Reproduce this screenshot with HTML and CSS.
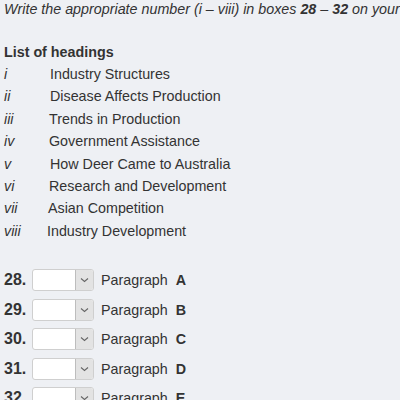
FILE: index.html
```html
<!DOCTYPE html>
<html>
<head>
<meta charset="utf-8">
<link rel="stylesheet" href="styles.css">
</head>
<body>
<div class="page">
  <p class="instr">Write the appropriate number (i – viii) in boxes <b>28</b> – <b>32</b> on your</p>
  <div class="list">
    <div class="title">List of headings</div>
    <div class="item"><span class="num">i</span><span class="h h1">Industry Structures</span></div>
    <div class="item"><span class="num">ii</span><span class="h h2">Disease Affects Production</span></div>
    <div class="item"><span class="num">iii</span><span class="h h3">Trends in Production</span></div>
    <div class="item"><span class="num">iv</span><span class="h h4">Government Assistance</span></div>
    <div class="item"><span class="num">v</span><span class="h h5">How Deer Came to Australia</span></div>
    <div class="item"><span class="num">vi</span><span class="h h6">Research and Development</span></div>
    <div class="item"><span class="num">vii</span><span class="h h7">Asian Competition</span></div>
    <div class="item"><span class="num">viii</span><span class="h h8">Industry Development</span></div>
  </div>
  <div class="questions">
    <div class="q"><span class="qn">28.</span><span class="sel"><span class="box"></span><span class="arrow"><svg width="9" height="6" viewBox="0 0 9 6"><path d="M1 1.5 L4.5 4.5 L8 1.5" fill="none" stroke="#666" stroke-width="1.1"/></svg></span></span><span class="para">Paragraph</span><span class="letter">A</span></div>
    <div class="q"><span class="qn">29.</span><span class="sel"><span class="box"></span><span class="arrow"><svg width="9" height="6" viewBox="0 0 9 6"><path d="M1 1.5 L4.5 4.5 L8 1.5" fill="none" stroke="#666" stroke-width="1.1"/></svg></span></span><span class="para">Paragraph</span><span class="letter">B</span></div>
    <div class="q"><span class="qn">30.</span><span class="sel"><span class="box"></span><span class="arrow"><svg width="9" height="6" viewBox="0 0 9 6"><path d="M1 1.5 L4.5 4.5 L8 1.5" fill="none" stroke="#666" stroke-width="1.1"/></svg></span></span><span class="para">Paragraph</span><span class="letter">C</span></div>
    <div class="q"><span class="qn">31.</span><span class="sel"><span class="box"></span><span class="arrow"><svg width="9" height="6" viewBox="0 0 9 6"><path d="M1 1.5 L4.5 4.5 L8 1.5" fill="none" stroke="#666" stroke-width="1.1"/></svg></span></span><span class="para">Paragraph</span><span class="letter">D</span></div>
    <div class="q"><span class="qn">32.</span><span class="sel"><span class="box"></span><span class="arrow"><svg width="9" height="6" viewBox="0 0 9 6"><path d="M1 1.5 L4.5 4.5 L8 1.5" fill="none" stroke="#666" stroke-width="1.1"/></svg></span></span><span class="para">Paragraph</span><span class="letter">E</span></div>
  </div>
</div>
</body>
</html>
```

FILE: styles.css
```css
html, body {
  margin: 0;
  padding: 0;
  background: #eef0f4;
}
body {
  font-family: "Liberation Sans", Arial, sans-serif;
  font-size: 14.3px;
  color: #333;
  overflow: hidden;
}
.page {
  padding: 0 4px;
}
.instr {
  margin: 0;
  font-style: italic;
  line-height: 18px;
  white-space: nowrap;
}
.instr b {
  font-weight: bold;
}
.list {
  margin-top: 23px;
}
.title {
  font-weight: bold;
  line-height: 22px;
}
.item {
  display: flex;
  line-height: 22.4px;
}
.num {
  font-style: italic;
  width: 46px;
  flex: none;
}
.h3, .h4, .h6 { margin-left: -1px; }
.h7 { margin-left: -2px; }
.h8 { margin-left: -3px; }
.questions {
  margin-top: 23px;
}
.q {
  display: flex;
  align-items: center;
  height: 29.5px;
}
.qn {
  font-size: 16px;
  font-weight: bold;
  width: 28px;
  flex: none;
}
.sel {
  display: flex;
  width: 62px;
  height: 22px;
  box-sizing: border-box;
  border: 1px solid #cfcfcf;
  border-radius: 3px;
  background: #fff;
  overflow: hidden;
}
.box {
  flex: 1;
}
.arrow {
  width: 17px;
  background: #e3e3e3;
  border-left: 1px solid #bdbdbd;
  display: flex;
  align-items: center;
  justify-content: center;
}
.para {
  margin-left: 7px;
}
.letter {
  font-weight: bold;
  margin-left: 8px;
}
```
